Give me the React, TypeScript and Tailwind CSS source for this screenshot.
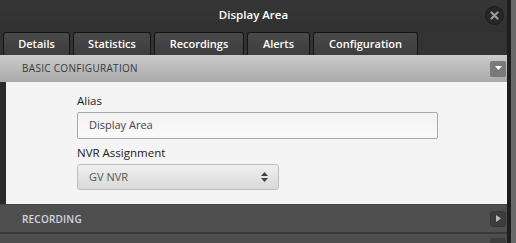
import React from "react";

export default function App() {
  const font = { fontFamily: '"Open Sans", "Noto Sans", sans-serif' };
  const tabs = [
    { label: "Details", w: "w-[67px]" },
    { label: "Statistics", w: "w-[78px]" },
    { label: "Recordings", w: "w-[90px]" },
    { label: "Alerts", w: "w-[63px]" },
    { label: "Configuration", w: "w-[105px]" },
  ];
  return (
    <div className="w-[516px] h-[243px] overflow-hidden flex bg-[#3a3a3a]" style={font}>
      <div className="w-[511px] h-full flex flex-col bg-[#333333] border-r-[4px] border-[#1e1e1e]">
        {/* title */}
        <div className="h-[32px] shrink-0 relative flex items-center justify-center bg-gradient-to-b from-[#363636] to-[#313131]">
          <span className="text-white text-[11.5px] font-semibold pb-[2px]">Display Area</span>
          <div className="absolute right-[3px] top-[6px] w-[19px] h-[19px] rounded-full bg-[#262626] border border-[#1c1c1c] flex items-center justify-center">
            <svg width="9" height="9" viewBox="0 0 9 9">
              <path d="M1.5 1.5 L7.5 7.5 M7.5 1.5 L1.5 7.5" stroke="#9a9a9a" strokeWidth="2.2" strokeLinecap="round" />
            </svg>
          </div>
        </div>
        {/* tabs */}
        <div className="h-[23px] shrink-0 flex items-end gap-[3px] pl-[3px]">
          {tabs.map((t) => (
            <div
              key={t.label}
              className={`${t.w} h-[23px] rounded-t-[3px] border border-b-0 border-[#141414] bg-gradient-to-b from-[#4a4a4a] to-[#3c3c3c] flex items-center justify-center text-white text-[11px] font-semibold`}
            >
              {t.label}
            </div>
          ))}
        </div>
        {/* basic configuration header */}
        <div className="h-[27px] shrink-0 flex items-center justify-between pl-[22px] pr-[1px] bg-gradient-to-b from-[#cbcbcb] to-[#a9a9a9]">
          <span className="text-[#3a3a3a] text-[10px] tracking-[0.3px]">BASIC CONFIGURATION</span>
          <div className="w-[16px] h-[16px] rounded-[2px] bg-[#7a7a7a] flex items-center justify-center">
            <svg width="7" height="5" viewBox="0 0 7 5">
              <path d="M0 0 H7 L3.5 4 Z" fill="#ffffff" />
            </svg>
          </div>
        </div>
        {/* content */}
        <div className="h-[122px] shrink-0 flex">
          <div className="w-[6px] bg-[#2a2a2a]" />
          <div className="flex-1 bg-[#f4f4f4] pl-[71px] pt-[11px] flex flex-col">
            <div className="text-[#222] text-[11.5px] leading-[16px]">Alias</div>
            <div className="mt-[3px] w-[361px] h-[27px] border border-[#a8a8a8] rounded-[2px] bg-gradient-to-b from-[#f2f2f2] to-[#fafafa] flex items-center pl-[11px] text-[#444] text-[11px]">
              Display Area
            </div>
            <div className="mt-[6px] text-[#222] text-[11.5px] leading-[16px]">NVR Assignment</div>
            <div className="mt-[3px] w-[202px] h-[26px] border border-[#bdbdbd] rounded-[3px] bg-gradient-to-b from-[#efefef] to-[#d9d9d9] flex items-center justify-between pl-[11px] pr-[10px] text-[#555] text-[11px]">
              <span>GV NVR</span>
              <svg width="7" height="10" viewBox="0 0 7 10">
                <path d="M0 4 L3.5 0 L7 4 Z M0 6 L3.5 10 L7 6 Z" fill="#444" />
              </svg>
            </div>
          </div>
        </div>
        {/* recording header */}
        <div className="h-[30px] shrink-0 flex items-center justify-between pl-[22px] pr-[1px] bg-[#4f4f4f] border-t border-[#444] border-b-[2px] border-b-[#383838]">
          <span className="text-[#d2d6e0] text-[10px] font-semibold tracking-[0.2px] pt-[1px]">RECORDING</span>
          <div className="w-[16px] h-[16px] rounded-[3px] bg-[#3d3d3d] border border-[#363636] flex items-center justify-center">
            <svg width="5" height="7" viewBox="0 0 5 7">
              <path d="M0 0 L5 3.5 L0 7 Z" fill="#b8c0b0" />
            </svg>
          </div>
        </div>
        <div className="flex-1 bg-[#4d4d4d] flex justify-end pr-[1px] pt-[4px]">
          <div className="w-[16px] h-[16px] rounded-[3px] bg-[#3d3d3d]" />
        </div>
      </div>
      <div className="flex-1 bg-[#6a6a6a]" />
    </div>
  );
}
